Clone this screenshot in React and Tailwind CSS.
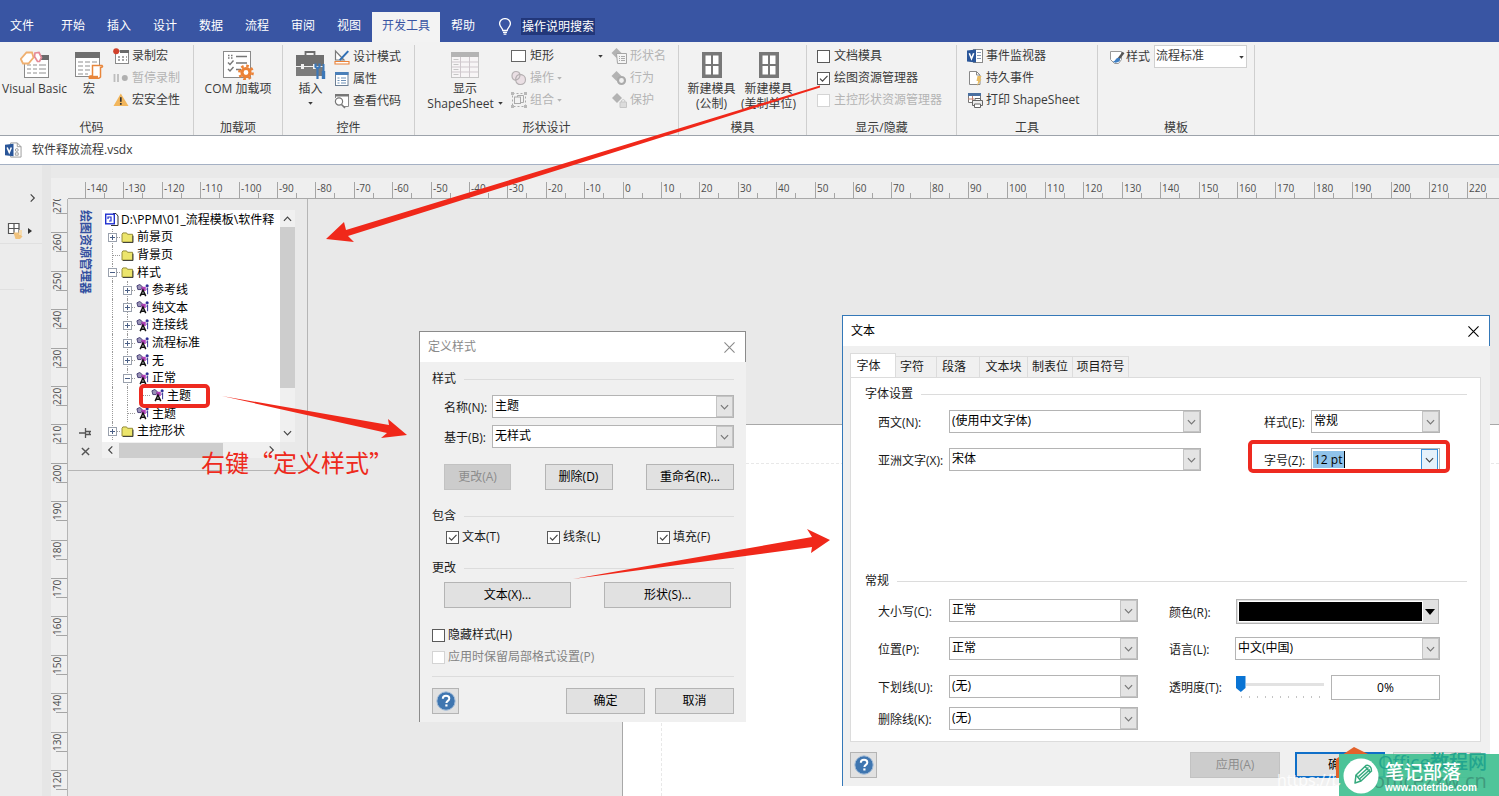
import React from "react";

const RULER_STEP = 38.4;

/* ---------- small shared pieces ---------- */

function Caret({ className = "" }) {
  return (
    <svg viewBox="0 0 6 4" className={"w-[5px] h-[3px] shrink-0 " + className} aria-hidden="true">
      <path d="M0 0h6L3 3.6z" fill="currentColor" />
    </svg>
  );
}

function Chevron({ className = "" }) {
  return (
    <svg viewBox="0 0 10 6" className={"w-[9px] h-[6px] " + className} fill="none" stroke="currentColor" strokeWidth="1.3" aria-hidden="true">
      <path d="M1 1l4 4 4-4" />
    </svg>
  );
}

function HelpIcon() {
  return (
    <svg viewBox="0 0 20 20" className="w-5 h-5" aria-hidden="true">
      <circle cx="10" cy="10" r="9.2" fill="#3f76b0" stroke="#a9c0da" strokeWidth="1" />
      <path d="M6.8 7.8C6.8 5.7 8.2 4.8 10 4.8c2 0 3.3 1 3.3 2.7 0 2.3-2.9 2.4-2.9 4.4" fill="none" stroke="#fff" strokeWidth="2" />
      <rect x="9.3" y="13.4" width="2.2" height="2.1" fill="#fff" />
    </svg>
  );
}

function VisioDoc({ className = "" }) {
  return (
    <svg viewBox="0 0 18 16" className={"w-[17px] h-4 shrink-0 " + className} aria-hidden="true">
      <path d="M6 .5h7l4 4v11H6z" fill="#fff" stroke="#9a9a9a" />
      <path d="M13 .5v4h4" fill="none" stroke="#9a9a9a" />
      <circle cx="12.5" cy="8" r="1.5" fill="none" stroke="#9a9a9a" />
      <path d="M11 11h3v2.5h-3z" fill="none" stroke="#9a9a9a" />
      <path d="M0 2.5l9-1v13l-9-1z" fill="#2a5699" />
      <path d="M2.3 5.3l2.2 5.4 2.2-5.4" fill="none" stroke="#fff" strokeWidth="1.6" />
    </svg>
  );
}

/* ---------- title bar and tabs ---------- */

const TABS = ["开始", "插入", "设计", "数据", "流程", "审阅", "视图"];

function Header() {
  return (
    <header className="h-[42px] bg-[#3955a3] pt-3 flex text-white">
      <nav className="flex h-[30px]">
        <button className="w-[50px] pl-[10px] text-left pb-[2px]">文件</button>
        {TABS.map((t) => (
          <button key={t} className="w-[46px] pb-[2px]">{t}</button>
        ))}
        <button className="w-[68px] bg-[#f3f3f3] text-[#3955a3] pb-[2px]">开发工具</button>
        <button className="w-[46px] pb-[2px]">帮助</button>
      </nav>
      <div className="flex items-center h-[28px] ml-[13px] gap-[10px]">
        <svg viewBox="0 0 12 17" className="w-3 h-[17px]" fill="none" stroke="#fff" strokeWidth="1.3" aria-hidden="true">
          <path d="M3.8 12.5c0-2.6-3.2-3.4-3.2-6.9a5.4 5 0 0 1 10.8 0c0 3.5-3.2 4.3-3.2 6.9zM4 14.4h4M4.6 16.2h2.8" />
        </svg>
        <button className="bg-[#22377a] px-px h-[17px] leading-[17px]">操作说明搜索</button>
      </div>
    </header>
  );
}

/* ---------- ribbon ---------- */

function Group({ title, width, children }) {
  return (
    <section className={"flex flex-col border-r border-[#cfcfcf] shrink-0 " + width}>
      <div className="h-[76px] flex items-start">{children}</div>
      <h2 className="text-center h-[14px] leading-[14px]">{title}</h2>
    </section>
  );
}

function BigButton({ icon, width, disabled, children }) {
  return (
    <button className={"flex flex-col items-center whitespace-nowrap shrink-0 " + width}>
      <span className={"h-[33px] flex items-center justify-center " + (disabled ? "opacity-60" : "")}>{icon}</span>
      <span className="leading-[15px]">{children}</span>
    </button>
  );
}

function SmallButton({ icon, disabled, caret, children }) {
  return (
    <button className={"flex items-center h-[22px] gap-[3px] whitespace-nowrap " + (disabled ? "text-[#b4b4b4]" : "")}>
      <span className="w-4 h-4 flex items-center justify-center shrink-0">{icon}</span>
      <span>{children}</span>
      {caret && <Caret />}
    </button>
  );
}

function RibbonCheck({ id, label, checked, disabled }) {
  return (
    <label htmlFor={id} className={"flex items-center h-[22px] gap-1 whitespace-nowrap " + (disabled ? "text-[#b4b4b4]" : "")}>
      <CheckBox id={id} checked={checked} disabled={disabled} />
      {label}
    </label>
  );
}

function CheckBox({ id, checked, disabled }) {
  return (
    <span className="relative w-[13px] h-[13px] shrink-0">
      <input
        id={id}
        type="checkbox"
        defaultChecked={checked}
        disabled={disabled}
        className={"peer block appearance-none w-[13px] h-[13px] bg-white border " + (disabled ? "border-[#d4d4d4]" : "border-[#5a5a5a]")}
      />
      <svg viewBox="0 0 13 13" className="absolute inset-0 hidden peer-checked:block pointer-events-none" fill="none" stroke="#444" strokeWidth="1.2" aria-hidden="true">
        <path d="M3 6.6l2.5 2.6 5-5.4" />
      </svg>
    </span>
  );
}

const VbIcon = (
  <svg viewBox="0 0 30 28" className="w-[30px] h-7">
    <rect x="4.5" y="6" width="24" height="20.5" fill="#fff" stroke="#8a8a8a" />
    <path d="M20 4h9v5h-9z" fill="#6b6b6b" />
    <path d="M7 14h4m2 0h4m2 0h7M7 18h4m2 0h4m2 0h7M7 22h4m2 0h4m2 0h7" stroke="#b5b5b5" strokeWidth="1.4" />
    <path d="M6.5 1.5h5.5l1.5 5-5 6H3L.8 8z" fill="#fff" stroke="#f0b070" strokeWidth="1.8" />
    <path d="M15 2l4-.5 2.5 5-2 4h-2l-3-5z" fill="#fff" stroke="#e58a98" strokeWidth="1.7" />
  </svg>
);
const MacroIcon = (
  <svg viewBox="0 0 30 28" className="w-[30px] h-7">
    <rect x="1.5" y="1.5" width="24" height="24" fill="#fff" stroke="#8a8a8a" />
    <path d="M1 1h25v6H1z" fill="#6f6f6f" />
    <path d="M4 11h5m2 0h5m2 0h5M4 15h5m2 0h5m2 0h5M4 19h5m2 0h5M4 23h5m2 0h3" stroke="#b5b5b5" strokeWidth="1.5" />
    <path d="M18.5 14.5h9.5q1.5 1.5-1.5 2v9.5q-1.5 1.5-3 1.5h-8q-1-2.5 1.5-2.5h1.5z" fill="#fff" stroke="#e8863c" strokeWidth="1.5" />
    <path d="M15 24.8h9v2.4h-9z" fill="#e8863c" />
  </svg>
);
const RecordIcon = (
  <svg viewBox="0 0 16 16" className="w-4 h-4">
    <rect x="2.5" y="3" width="13" height="12.5" fill="#fff" stroke="#8a8a8a" />
    <path d="M7 2h9v3H7z" fill="#6b6b6b" />
    <path d="M5 9h2m2 0h2m2 0h1M5 12h2m2 0h2m2 0h1" stroke="#8a8a8a" strokeWidth="1.3" />
    <circle cx="3.2" cy="3.2" r="3" fill="#d0402a" />
  </svg>
);
const PauseIcon = (
  <svg viewBox="0 0 16 16" className="w-4 h-4">
    <path d="M1.500 4v8M5 4v8" stroke="#bdbdbd" strokeWidth="1.8" />
    <circle cx="11.8" cy="8" r="3" fill="#b0b0b0" />
  </svg>
);
const WarnIcon = (
  <svg viewBox="0 0 16 16" className="w-4 h-4">
    <path d="M7.8 1.5L15.5 14H.5z" fill="#f2b65c" />
    <path d="M7.8 5.2v4.6" stroke="#333" strokeWidth="1.7" />
    <path d="M7.8 11v1.8" stroke="#333" strokeWidth="1.7" />
  </svg>
);
const ComIcon = (
  <svg viewBox="0 0 32 30" className="w-8 h-[30px]">
    <rect x="1.500" y="1.500" width="27" height="26" fill="#fff" stroke="#8a8a8a" />
    <path d="M6 5.500h1.500m1.500 0h1.500M6 8h1.500m1.500 0h1.500M14 6.500h11M14 13h11M14 19.500h5" stroke="#777" strokeWidth="1.300" />
    <path d="M6 12.500l2 2 3.500-4M6 19l2 2 3.500-4" fill="none" stroke="#777" strokeWidth="1.400" />
    <circle cx="24" cy="22.500" r="4" fill="#fff" stroke="#ec8237" strokeWidth="3.200" />
    <circle cx="24" cy="22.500" r="6.600" fill="none" stroke="#ec8237" strokeWidth="2.600" strokeDasharray="2.600 2.580" />
  </svg>
);
const ToolboxIcon = (
  <svg viewBox="0 0 32 30" className="w-8 h-[30px]">
    <path d="M10.500 5V2h9v3" fill="none" stroke="#6b6b6b" strokeWidth="1.800" />
    <path d="M1 5h28v11H1z" fill="#6f6f6f" />
    <path d="M1 17h28v9H1z" fill="#7c7c7c" />
    <path d="M6 14h3v5H6zM18 14h3v5h-3z" fill="#f1f1f1" />
    <path d="M20.500 13.500v3.500q2 2 4 0v-3.500M22.500 18v11" fill="none" stroke="#3c78b8" strokeWidth="2.200" />
    <path d="M28.500 14v8" stroke="#3c78b8" strokeWidth="2" />
    <path d="M28.500 21v8" stroke="#3c78b8" strokeWidth="3.400" />
  </svg>
);
const DesignIcon = (
  <svg viewBox="0 0 16 16" className="w-4 h-4">
    <path d="M1.500 2v9l8.500 0z" fill="#fff" stroke="#7a7a7a" strokeWidth="1.200" />
    <path d="M5 10.500L13.500 1.500l1.500 1.300-8.500 9z" fill="#2f6fb5" />
    <path d="M1 12.500h14v2.500H1z" fill="#fff" stroke="#ec8237" strokeWidth="1.100" />
  </svg>
);
const PropsIcon = (
  <svg viewBox="0 0 16 16" className="w-4 h-4">
    <rect x="1.500" y="1.500" width="12.500" height="13" fill="#fff" stroke="#6b7f95" />
    <path d="M1 1h13.500v3H1z" fill="#4a7fb8" />
    <path d="M3.500 7h2m1.500 0h5M3.500 9.500h2m1.500 0h5M3.500 12h2m1.500 0h5" stroke="#6d8fb5" strokeWidth="1.200" />
  </svg>
);
const CodeIcon = (
  <svg viewBox="0 0 16 16" className="w-4 h-4">
    <path d="M1.500 5V1.500h13v12H10" fill="#fff" stroke="#8a8a8a" />
    <path d="M1 1h14v2.500H1z" fill="#777" />
    <circle cx="5" cy="8.500" r="3.600" fill="#fff" stroke="#777" strokeWidth="1.200" />
    <path d="M7.500 11.500l3.500 3.500" stroke="#777" strokeWidth="1.600" />
  </svg>
);
const SheetIcon = (
  <svg viewBox="0 0 28 26" className="w-7 h-[26px]">
    <rect x=".5" y=".5" width="27" height="25" fill="#fbf8fa" stroke="#a8a8a8" />
    <path d="M0 0h28v5H0z" fill="#8b8b8b" />
    <path d="M9.500 5v20M18.500 5v20M1 10h26M1 15h26M1 20h26" stroke="#b9adb5" />
    <path d="M2.500 7.500h5M2.500 12.500h5M2.500 17.500h5M2.500 22.500h5" stroke="#aaa" />
  </svg>
);
const RectIcon = (
  <svg viewBox="0 0 16 16" className="w-4 h-4">
    <rect x=".5" y="2.500" width="14" height="11" fill="#fff" stroke="#666" />
  </svg>
);
const OperateIcon = (
  <svg viewBox="0 0 16 16" className="w-4 h-4" fill="#eadfe4" stroke="#b5b0b2" strokeWidth="1.200">
    <path d="M5 1.500c2.200 0 3.500 1.200 4 2.800 3 .2 5.500 2.200 5.500 5.200 0 2.900-2 5-4.800 5-2.700 0-4.500-1.800-5-4.200C2.500 9.800 1 8 1 5.700 1 3.200 2.700 1.500 5 1.500z" />
    <path d="M9 4.300c-2.700.3-4.500 2.700-4.300 6M9 4.300c.3 2.700-1.500 5-4.300 6" fill="none" />
  </svg>
);
const GroupIcon = (
  <svg viewBox="0 0 16 16" className="w-4 h-4" fill="none" stroke="#aaa">
    <rect x="1.500" y="1.500" width="13" height="13" strokeDasharray="2 2" />
    <rect x="3.500" y="5" width="6" height="6.500" />
    <path d="M6.500 5V3.500h6v7H10" />
    <path d="M0 0h3v3H0zM13 0h3v3h-3zM0 13h3v3H0zM13 13h3v3h-3z" fill="#b8b8b8" stroke="none" />
  </svg>
);
const NameIcon = (
  <svg viewBox="0 0 16 16" className="w-4 h-4">
    <path d="M5.500 0l5 5-5 5-5-5z" fill="#b3b3b3" />
    <path d="M5.500 5.500h10v10h-9z" fill="#f5f5f5" stroke="#a5a5a5" />
    <path d="M8 8.500h1m1 0h4M8 10.500h1m1 0h4M8 12.500h1m1 0h4" stroke="#aaa" />
  </svg>
);
const BehaveIcon = (
  <svg viewBox="0 0 16 16" className="w-4 h-4">
    <path d="M5.500 1l5 5-5 5-5-5z" fill="#b3b3b3" />
    <circle cx="10.500" cy="10.500" r="3.500" fill="#f1f1f1" stroke="#aaa" strokeWidth="2.200" />
  </svg>
);
const ProtectIcon = (
  <svg viewBox="0 0 16 16" className="w-4 h-4">
    <path d="M6 1l5 5-5 5-5-5z" fill="#b3b3b3" />
    <path d="M9 10h6.500v5.500H9z" fill="#dcdcdc" stroke="#c6c6c6" />
    <path d="M10.500 10V8.500q1.700-2 3.400 0V10" fill="none" stroke="#c6c6c6" />
  </svg>
);
const StencilIcon = (
  <svg viewBox="0 0 22 28" className="w-[22px] h-7">
    <path d="M1 1h20v26H1z" fill="#787878" />
    <path d="M4.500 4.500h5.500v8.500H4.500zM12 4.500h5.500v8.500H12zM4.500 15h5.500v8.500H4.500zM12 15h5.500v8.500H12z" fill="#fff" />
  </svg>
);
const EventMonitorIcon = (
  <svg viewBox="0 0 16 16" className="w-4 h-4">
    <rect x="6.500" y="1.500" width="9" height="13" fill="#fff" stroke="#8a8a8a" />
    <path d="M10 4.500h4M10 7.500h4M10 10.500h4" stroke="#8a9bb5" />
    <path d="M0 2.500l9-1v13l-9-1z" fill="#2a5699" />
    <path d="M2.300 5.300l2.200 5.400 2.200-5.400" fill="none" stroke="#fff" strokeWidth="1.600" />
  </svg>
);
const PersistIcon = (
  <svg viewBox="0 0 16 16" className="w-4 h-4">
    <path d="M2.500 1.500h7l3.500 3.500v9.500H2.500z" fill="#fff" stroke="#888" />
    <path d="M9.500 1.500v3.500H13" fill="none" stroke="#888" />
    <path d="M10.500 6h4l-1.500 3.500h1.500L10 16l1.200-5H9.500z" fill="#e9bd62" />
  </svg>
);
const PrintIcon = (
  <svg viewBox="0 0 16 16" className="w-4 h-4">
    <path d="M1.500 1.500h12v9h-12z" fill="#fff" stroke="#777" />
    <path d="M1 1h13v3H1z" fill="#4a6f9f" />
    <path d="M5.500 4v8M1 7h6" stroke="#c08070" />
    <path d="M5.500 8.500h10v5h-10z" fill="#ededed" stroke="#666" />
    <path d="M8 6.500h5.500v2H8zM7.500 12h6v3.500h-6z" fill="#fff" stroke="#666" />
  </svg>
);
const StyleIcon = (
  <svg viewBox="0 0 16 16" className="w-4 h-4">
    <path d="M1.500 2.500h11v8l-3 4h-4l-4-4z" fill="#fff" stroke="#999" />
    <path d="M14.500 3.500l-5 6.500" stroke="#555" strokeWidth="2.400" />
    <path d="M4 12.500q1.500 2 5 .5 2.500-1 2-3.500-2-1.500-4 .5-1 2-3 2.500z" fill="#3f7ec2" />
  </svg>
);

function Ribbon() {
  return (
    <div className="h-[94px] bg-[#f2f2f2] border-b border-[#9da3ab] pt-[3px] flex text-[#3a3a3a] overflow-hidden">
      <Group title="代码" width="w-[194px] pr-[10px]">
        <BigButton icon={VbIcon} width="w-[69px] mt-[3px]">Visual Basic</BigButton>
        <BigButton icon={MacroIcon} width="w-[40px] mt-[3px]">宏</BigButton>
        <div className="ml-1">
          <SmallButton icon={RecordIcon}>录制宏</SmallButton>
          <SmallButton icon={PauseIcon} disabled>暂停录制</SmallButton>
          <SmallButton icon={WarnIcon}>宏安全性</SmallButton>
        </div>
      </Group>
      <Group title="加载项" width="w-[89px]">
        <BigButton icon={ComIcon} width="w-full mt-[3px]">COM 加载项</BigButton>
      </Group>
      <Group title="控件" width="w-[132px]">
        <BigButton icon={ToolboxIcon} width="w-[51px] pl-1 mt-[3px]">
          插入<Caret className="mx-auto mt-[6px]" />
        </BigButton>
        <div className="pt-px">
          <SmallButton icon={DesignIcon}>设计模式</SmallButton>
          <SmallButton icon={PropsIcon}>属性</SmallButton>
          <SmallButton icon={CodeIcon}>查看代码</SmallButton>
        </div>
      </Group>
      <Group title="形状设计" width="w-[264px]">
        <BigButton icon={SheetIcon} width="w-[96px] pl-1 mt-[3px]" disabled>
          显示<span className="flex items-center gap-1">ShapeSheet<Caret /></span>
        </BigButton>
        <div>
          <div className="flex items-center w-[92px] justify-between">
            <SmallButton icon={RectIcon}>矩形</SmallButton>
            <Caret />
          </div>
          <SmallButton icon={OperateIcon} disabled caret>操作</SmallButton>
          <SmallButton icon={GroupIcon} disabled caret>组合</SmallButton>
        </div>
        <div className="ml-2">
          <SmallButton icon={NameIcon} disabled>形状名</SmallButton>
          <SmallButton icon={BehaveIcon} disabled>行为</SmallButton>
          <SmallButton icon={ProtectIcon} disabled>保护</SmallButton>
        </div>
      </Group>
      <Group title="模具" width="w-[128px]">
        <BigButton icon={StencilIcon} width="w-[57px] ml-1 mt-[3px]">新建模具<br />(公制)</BigButton>
        <BigButton icon={StencilIcon} width="w-[57px] mt-[3px]">新建模具<br />(美制单位)</BigButton>
      </Group>
      <Group title="显示/隐藏" width="w-[150px]">
        <div className="ml-[10px]">
          <RibbonCheck id="doc-stencil" label="文档模具" />
          <RibbonCheck id="drawing-explorer" label="绘图资源管理器" checked />
          <RibbonCheck id="master-explorer" label="主控形状资源管理器" disabled />
        </div>
      </Group>
      <Group title="工具" width="w-[141px]">
        <div className="ml-[10px]">
          <SmallButton icon={EventMonitorIcon}>事件监视器</SmallButton>
          <SmallButton icon={PersistIcon}>持久事件</SmallButton>
          <SmallButton icon={PrintIcon}>打印 ShapeSheet</SmallButton>
        </div>
      </Group>
      <Group title="模板" width="w-[157px]">
        <div className="ml-[11px] flex items-center">
          {StyleIcon}
          <label htmlFor="ribbon-style" className="ml-px">样式</label>
          <span className="relative ml-1">
            <select id="ribbon-style" className="block appearance-none w-[93px] h-[23px] bg-white border border-[#d0d0d0] pl-px pb-[2px]">
              <option>流程标准</option>
            </select>
            <Caret className="absolute right-[3px] top-[11px] pointer-events-none" />
          </span>
        </div>
      </Group>
    </div>
  );
}

/* ---------- rulers ---------- */

function HorizontalRuler() {
  const marks = Array.from({ length: 37 }, (_, i) => ({ value: -140 + i * 10, x: 17 + Math.round(i * RULER_STEP) }));
  return (
    <svg className="block w-full h-[21px] bg-[#efefef] border-b border-[#a9a9a9]" aria-label="水平标尺">
      <g stroke="#a5a5a5" shapeRendering="crispEdges">
        {marks.map((m) => (
          <path key={m.value} d={`M${m.x}.5 4v16M${m.x + 19}.5 15v5`} />
        ))}
      </g>
      <g fill="#4d4d4d" fontSize="10">
        {marks.map((m) => (
          <text key={m.value} x={m.x + 2} y="14">{m.value}</text>
        ))}
      </g>
    </svg>
  );
}

function VerticalRuler() {
  const marks = Array.from({ length: 16 }, (_, i) => ({ value: 270 - i * 10, y: -5 + Math.round(i * RULER_STEP) }));
  return (
    <svg className="block w-[17px] h-full bg-[#efefef] border-r border-[#b5b5b5]" aria-label="垂直标尺">
      <g stroke="#a5a5a5" shapeRendering="crispEdges">
        {marks.map((m) => (
          <path key={m.value} d={`M0 ${m.y}.5h16M5 ${m.y + 19}.5h11`} />
        ))}
      </g>
      <g fill="#4d4d4d" fontSize="10">
        {marks.map((m) => (
          <text key={m.value} transform={`translate(10 ${m.y + 19}) rotate(-90)`}>{m.value}</text>
        ))}
      </g>
    </svg>
  );
}

/* ---------- drawing explorer ---------- */

function Folder() {
  return (
    <svg viewBox="0 0 14 12" className="w-[13px] h-[11px]" aria-hidden="true">
      <path d="M1 2.500L2 1h4l1 1.500h5.500v8.500H1z" fill="#ece56c" stroke="#8c8430" />
      <path d="M2 11.500h11V4" fill="none" stroke="#333" />
    </svg>
  );
}

function StyleGlyph() {
  return (
    <svg viewBox="0 0 14 14" className="w-[13px] h-[13px]" aria-hidden="true">
      <path d="M1 2l3-1.500 3 2.500-1.500 3L2 6z" fill="#9a93b8" stroke="#403870" />
      <path d="M6 3h4.500v4.500H6z" fill="#b040b8" />
      <path d="M11 1h2v2h-2zM11 5.500h1.500M12.500 4v7" fill="#2020a0" stroke="#2a2a90" />
      <path d="M4.500 13L7.500 6.500 10.500 13M5.500 11h4" fill="none" stroke="#111" strokeWidth="1.600" />
    </svg>
  );
}

function RootGlyph() {
  return (
    <svg viewBox="0 0 14 13" className="w-[14px] h-[13px]" aria-hidden="true">
      <path d="M8 .5h3l2 2.500v9.500H6" fill="#fff" stroke="#333" />
      <rect x=".7" y="1.200" width="8.600" height="9.600" fill="#fff" stroke="#2030d0" strokeWidth="1.400" />
      <path d="M3 6V4h3v4H4" fill="none" stroke="#2030d0" strokeWidth="1.200" />
    </svg>
  );
}

function Guide({ line, branch, expander }) {
  return (
    <span className="relative w-[15px] self-stretch flex items-center justify-center shrink-0">
      {line && <span className="absolute left-[7px] inset-y-0 border-l border-dotted border-[#9a9a9a]" />}
      {branch && <span className="absolute left-[7px] right-0 border-t border-dotted border-[#9a9a9a]" />}
      {expander && (
        <svg viewBox="0 0 9 9" className="relative w-[9px] h-[9px]" aria-hidden="true">
          <rect x=".5" y=".5" width="8" height="8" fill="#fff" stroke="#9aa1ad" />
          <path d={expander === "+" ? "M2 4.500h5M4.500 2v5" : "M2 4.500h5"} stroke="#4a5f86" />
        </svg>
      )}
    </span>
  );
}

const TREE = [
  { label: "前景页", level: 1, expander: "+" },
  { label: "背景页", level: 1 },
  { label: "样式", level: 1, expander: "-" },
  { label: "参考线", level: 2, expander: "+" },
  { label: "纯文本", level: 2, expander: "+" },
  { label: "连接线", level: 2, expander: "+" },
  { label: "流程标准", level: 2, expander: "+" },
  { label: "无", level: 2, expander: "+" },
  { label: "正常", level: 2, expander: "-" },
  { label: "主题", level: 3 },
  { label: "主题", level: 2 },
  { label: "主控形状", level: 1, expander: "+" },
];

function Explorer() {
  return (
    <aside className="w-[240px] h-[272px] bg-[#e9e9e9] border-r border-b border-[#b5b5b5] flex shrink-0 pt-[11px] pb-[10px]">
      <div className="w-[34px] flex flex-col items-center justify-between">
        <h2 className="text-[#3350a0] font-bold leading-[14px] [writing-mode:vertical-rl] [text-orientation:sideways]">绘图资源管理器</h2>
        <div className="flex flex-col items-center gap-[9px] text-[#555]">
          <button aria-label="固定">
            <svg viewBox="0 0 12 10" className="w-3 h-[10px]" fill="none" stroke="currentColor" strokeWidth="1.300">
              <path d="M0 5h6M6.500 0v10M6 3.500h6M6 6.500h6M10.500 3v4" />
            </svg>
          </button>
          <button aria-label="关闭">
            <svg viewBox="0 0 10 10" className="w-[9px] h-[9px] mb-1" fill="none" stroke="currentColor" strokeWidth="1.600">
              <path d="M1 1l8 8M9 1l-8 8" />
            </svg>
          </button>
        </div>
      </div>
      <div className="flex flex-col w-[193px]">
        <div className="flex">
          <ul className="w-[178px] h-[232px] bg-white pl-[3px] pt-px pb-[2px] flex flex-col overflow-hidden text-black">
            <li className="flex-1 flex items-center gap-[2px] whitespace-nowrap">
              <RootGlyph />
              <span className="leading-4">D:\PPM\01_流程模板\软件释</span>
            </li>
            {TREE.map((n, i) => (
              <li key={i} className="flex-1 flex items-center whitespace-nowrap">
                <Guide line branch={n.level === 1} expander={n.level === 1 && n.expander} />
                {n.level > 1 && <Guide line branch={n.level === 2} expander={n.level === 2 && n.expander} />}
                {n.level > 2 && <Guide branch />}
                <span className="w-[17px] flex items-center pl-px shrink-0">{n.level === 1 ? <Folder /> : <StyleGlyph />}</span>
                <span className="leading-4">{n.label}</span>
              </li>
            ))}
          </ul>
          <div className="w-[15px] bg-[#f0f0f0] flex flex-col items-center text-[#444]">
            <span className="h-[17px] flex items-center"><Chevron className="rotate-180" /></span>
            <span className="w-full h-[161px] bg-[#cdcdcd]" />
            <span className="flex-1" />
            <span className="h-[18px] flex items-center"><Chevron /></span>
          </div>
        </div>
        <div className="w-[178px] h-4 bg-[#f0f0f0] flex items-center text-[#444]">
          <span className="w-[17px] flex justify-center"><Chevron className="rotate-90" /></span>
          <span className="w-[104px] h-[15px] bg-[#cdcdcd]" />
          <span className="flex-1" />
          <span className="w-[17px] flex justify-center"><Chevron className="-rotate-90" /></span>
        </div>
      </div>
    </aside>
  );
}

/* ---------- dialog controls ---------- */

function Combo({ id, value, width }) {
  return (
    <span className={"relative block shrink-0 " + width}>
      <select id={id} className="block appearance-none w-full h-[23px] bg-white border border-[#b4b4b4] pl-[2px] pb-px text-black">
        <option>{value}</option>
      </select>
      <span className="absolute right-px top-px bottom-px w-[17px] border flex items-center justify-center pointer-events-none bg-[#e4e4e4] border-[#c4c4c4] text-[#777]">
        <Chevron />
      </span>
    </span>
  );
}

function PushButton({ width, disabled, focused, children }) {
  return (
    <button
      disabled={disabled}
      className={
        "h-[26px] leading-[22px] shrink-0 " + width + " " +
        (disabled ? "bg-[#cccccc] border border-[#c2c2c2] text-[#8c8c8c]" : focused ? "bg-[#e1e1e1] border-2 border-[#0f6fc8] text-black" : "bg-[#e1e1e1] border border-[#b4b4b4] text-black")
      }
    >
      {children}
    </button>
  );
}

function Section({ children }) {
  return (
    <div className="flex items-center gap-2 h-4">
      <h3 className="leading-4">{children}</h3>
      <span className="flex-1 border-t border-[#dcdcdc]" />
    </div>
  );
}

function Check({ id, label, checked, disabled }) {
  return (
    <label htmlFor={id} className={"flex items-center gap-[3px] h-[22px] whitespace-nowrap " + (disabled ? "text-[#838383]" : "")}>
      <CheckBox id={id} checked={checked} disabled={disabled} />
      {label}
    </label>
  );
}

function CloseX({ className }) {
  return (
    <button aria-label="关闭" className={className}>
      <svg viewBox="0 0 12 12" className="w-[11px] h-[11px]" fill="none" stroke="currentColor" strokeWidth="1.200">
        <path d="M.5.5l11 11M11.500.5l-11 11" />
      </svg>
    </button>
  );
}

function HelpButton() {
  return (
    <button aria-label="帮助" className="w-[27px] h-[26px] bg-[#e1e1e1] border border-[#b4b4b4] flex items-center justify-center">
      <HelpIcon />
    </button>
  );
}

function DefineStyleDialog() {
  return (
    <section role="dialog" aria-label="定义样式" className="absolute left-[419px] top-[331px] w-[327px] bg-[#f0f0f0] border-l border-t border-[#8b8b8b] text-[#1a1a1a] pb-[8px]">
      <div className="h-[30px] bg-white border-r border-[#8b8b8b] flex items-center justify-between pl-2 pr-[10px] text-[#8a8a8a]">
        <h2>定义样式</h2>
        <CloseX />
      </div>
      <div className="px-[12px] pt-[9px]">
        <Section>样式</Section>
        <div className="pl-[12px] pt-2 flex flex-col gap-[7px]">
          <div className="flex items-end">
            <label htmlFor="style-name" className="w-12 leading-5 whitespace-nowrap">名称(N):</label>
            <Combo id="style-name" value="主题" width="w-[242px]" />
          </div>
          <div className="flex items-end">
            <label htmlFor="style-base" className="w-12 leading-5 whitespace-nowrap">基于(B):</label>
            <Combo id="style-base" value="无样式" width="w-[242px]" />
          </div>
        </div>
        <div className="pl-[12px] pt-4 flex justify-between">
          <PushButton width="w-[67px]" disabled>更改(A)</PushButton>
          <PushButton width="w-[68px]">删除(D)</PushButton>
          <PushButton width="w-[88px]">重命名(R)...</PushButton>
        </div>
        <div className="pt-[18px]"><Section>包含</Section></div>
        <div className="pt-[2px] pl-[14px] grid grid-cols-[101px_110px_auto]">
          <Check id="inc-text" label="文本(T)" checked />
          <Check id="inc-line" label="线条(L)" checked />
          <Check id="inc-fill" label="填充(F)" checked />
        </div>
        <div className="pt-3"><Section>更改</Section></div>
        <div className="pt-[6px] pl-[12px] pr-[3px] flex justify-between">
          <PushButton width="w-[127px]">文本(X)...</PushButton>
          <PushButton width="w-[127px]">形状(S)...</PushButton>
        </div>
        <div className="pt-4 pb-[8px] border-b border-[#dcdcdc]">
          <Check id="hide-style" label="隐藏样式(H)" />
          <Check id="keep-format" label="应用时保留局部格式设置(P)" disabled />
        </div>
        <div className="pt-[11px] flex gap-[10px]">
          <HelpButton />
          <span className="flex-1" />
          <PushButton width="w-[79px]">确定</PushButton>
          <PushButton width="w-[79px]">取消</PushButton>
        </div>
      </div>
    </section>
  );
}

function Field({ id, label, value }) {
  return (
    <div className="flex items-end">
      <label htmlFor={id} className="w-[71px] leading-5 whitespace-nowrap">{label}</label>
      <Combo id={id} value={value} width="w-[189px]" />
    </div>
  );
}

function TextDialog() {
  return (
    <section role="dialog" aria-label="文本" className="absolute left-[842px] top-[315px] w-[648px] bg-[#f0f0f0] border-l border-t border-[#3478b8] text-[#1a1a1a] pb-[8px]">
      <div className="h-[30px] bg-white border-r border-[#3478b8] flex items-center justify-between pl-2 pr-[10px] text-black">
        <h2>文本</h2>
        <CloseX />
      </div>
      <div className="pl-[7px] pr-[9px] pt-[7px]">
        <div role="tablist" className="flex items-end h-6">
          <button role="tab" className="h-6 w-[46px] bg-white border border-b-0 border-[#dcdcdc] pr-[9px]">字体</button>
          <button role="tab" className="h-[21px] w-[41px] border-t border-r border-[#dcdcdc] pr-2">字符</button>
          <button role="tab" className="h-[21px] w-[43px] border-t border-r border-[#dcdcdc] pr-2">段落</button>
          <button role="tab" className="h-[21px] w-[48px] border-t border-r border-[#dcdcdc]">文本块</button>
          <button role="tab" className="h-[21px] w-[45px] border-t border-r border-[#dcdcdc]">制表位</button>
          <button role="tab" className="h-[21px] w-[56px] border-t border-r border-[#dcdcdc]">项目符号</button>
        </div>
        <div className="bg-white border border-[#dcdcdc] h-[365px] pl-[14px] pr-[13px] pt-2 flex flex-col">
          <Section>字体设置</Section>
          <div className="pl-[13px] pr-[27px] pt-2 flex justify-between">
            <div className="flex flex-col gap-[15px]">
              <div className="flex items-end">
                <label htmlFor="font-latin" className="w-[71px] leading-5 whitespace-nowrap">西文(N):</label>
                <Combo id="font-latin" value="(使用中文字体)" width="w-[252px]" />
              </div>
              <div className="flex items-end">
                <label htmlFor="font-asian" className="w-[71px] leading-5 whitespace-nowrap">亚洲文字(X):</label>
                <Combo id="font-asian" value="宋体" width="w-[252px]" />
              </div>
            </div>
            <div className="flex flex-col gap-[15px]">
              <div className="flex items-end">
                <label htmlFor="font-style" className="w-[47px] leading-5 whitespace-nowrap">样式(E):</label>
                <Combo id="font-style" value="常规" width="w-[129px]" />
              </div>
              <div className="flex items-end">
                <label htmlFor="font-size" className="w-[47px] leading-5 whitespace-nowrap">字号(Z):</label>
                <span className="relative flex items-center w-[129px] h-[23px] bg-white border border-[#b4b4b4] pl-px">
                  <span className="relative border-r border-black">
                    <input id="font-size" defaultValue="12 pt" className="block w-[31px] h-[17px] px-px bg-[#90c3ea] text-black outline-none" />
                  </span>
                  <button aria-label="字号列表" className="absolute right-px inset-y-0 w-[17px] bg-[#e5f1fb] border border-[#3a8fd8] flex items-center justify-center text-[#444]">
                    <Chevron />
                  </button>
                </span>
              </div>
            </div>
          </div>
          <div className="pt-[102px]"><Section>常规</Section></div>
          <div className="pl-[13px] pr-[27px] pt-[10px] flex justify-between">
            <div>
              <div className="flex flex-col gap-[15px]">
                <Field id="case" label="大小写(C):" value="正常" />
                <Field id="position" label="位置(P):" value="正常" />
                <Field id="underline" label="下划线(U):" value="(无)" />
              </div>
              <div className="pt-[9px]">
                <Field id="strike" label="删除线(K):" value="(无)" />
              </div>
            </div>
            <div className="flex flex-col gap-[13px]">
              <div className="flex items-center">
                <label htmlFor="color" className="w-[67px] pt-[2px]">颜色(R):</label>
                <button id="color" aria-label="黑色" className="flex w-[203px] h-[25px] bg-[#e1e1e1] border border-[#b4b4b4] p-px">
                  <span className="flex-1 h-[21px] bg-black border border-white" />
                  <span className="w-[14px] h-[21px] flex items-center justify-center">
                    <svg viewBox="0 0 10 6" className="w-[10px] h-[6px]"><path d="M0 0h10L5 6z" /></svg>
                  </span>
                </button>
              </div>
              <div className="flex items-end">
                <label htmlFor="language" className="w-[66px] leading-5">语言(L):</label>
                <Combo id="language" value="中文(中国)" width="w-[205px]" />
              </div>
              <div className="flex items-center pt-[2px]">
                <label htmlFor="opacity" className="w-[67px] whitespace-nowrap">透明度(T):</label>
                <span className="relative w-[88px] h-[25px]">
                  <input id="opacity" type="range" defaultValue="0" className="absolute inset-0 w-full h-full opacity-0" />
                  <svg viewBox="0 0 88 25" className="absolute inset-0 pointer-events-none" aria-hidden="true">
                    <rect x="10" y="8" width="78" height="3" fill="#e2e2e2" />
                    <path d="M0 1h9.500v12l-4.700 4-4.800-4z" fill="#0a74d4" />
                    <path d="M5.500 21v2M13.500 21v2M21.500 21v2M29.500 21v2M36.500 21v2M44.500 21v2M52.500 21v2M60.500 21v2M67.500 21v2M75.500 21v2M83.500 21v2" stroke="#c4c4c4" />
                  </svg>
                </span>
                <input aria-label="透明度值" defaultValue="0%" className="ml-[7px] w-[109px] h-[25px] border border-[#b4b4b4] bg-white text-center text-black" />
              </div>
            </div>
          </div>
        </div>
        <div className="pt-[10px] flex">
          <HelpButton />
          <span className="flex-1" />
          <PushButton width="w-[90px]" disabled>应用(A)</PushButton>
          <PushButton width="w-[90px] ml-[15px]" focused>确定</PushButton>
          <PushButton width="w-[88px] ml-2 opacity-60">取消</PushButton>
        </div>
      </div>
    </section>
  );
}

/* ---------- annotations and watermark ---------- */

function Annotations() {
  return (
    <>
      <svg className="absolute left-0 top-0 w-full h-full pointer-events-none" aria-hidden="true">
        <g fill="#f0281a">
          <path d="M820 85.500L346 230l-2-8-18 17 28 3-6-6L820 87.500z" />
          <path d="M222 396l167 29-1-6 19 16-26 3 6-5z" />
          <path d="M573 579l239-42-5-8 23 11-19 13 1-6z" />
        </g>
        <g fill="none" stroke="#ee2a20" strokeWidth="4">
          <rect x="141" y="386" width="67" height="20" rx="3" />
          <rect x="1250" y="442" width="198" height="29" rx="3" />
        </g>
      </svg>
      <p className="absolute left-[201px] top-[446px] text-2xl leading-8 text-[#ee2a1c] font-['Noto_Sans_CJK_SC',sans-serif] whitespace-nowrap">右键“定义样式”</p>
    </>
  );
}

function Watermark() {
  return (
    <div className="absolute right-0 bottom-0 w-[160px] h-[42px] bg-[#3dbf8f]/90">
      <span className="absolute -left-[62px] top-[16px] text-base leading-5 text-white/80 whitespace-nowrap">https://b</span>
      <svg viewBox="0 0 34 36" className="absolute -left-[3px] -top-[7px] w-[34px] h-9" aria-hidden="true">
        <path d="M18 0l14 7v24H0V12z" fill="#e2622c" />
        <path d="M3 7h31v29H3z" fill="#4cc398" />
      </svg>
      <span className="absolute left-[39px] -top-[4px] text-[19px] leading-6 font-medium text-[#22a58e] whitespace-nowrap">Office教程网</span>
      <span className="absolute left-[34px] top-[15px] text-xl leading-6 text-[#3f9a7d] whitespace-nowrap">officezxw.cn</span>
      <svg viewBox="0 0 36 36" className="absolute left-1 top-1 w-9 h-9" aria-hidden="true">
        <circle cx="18" cy="18" r="17.500" fill="#fff" />
        <g fill="none" stroke="#35a97d" strokeWidth="1.500" strokeLinejoin="round">
          <path d="M13 17L23 7.500q2-1 4 1t1.500 4.500L18 23l-6 2z" />
          <path d="M13 17l5 6M15.500 18.500l10-9M17 20.500l10-9M22 8.500l5 5.500" />
        </g>
      </svg>
      <div className="absolute left-[46px] top-[7px] text-white">
        <p className="text-[19px] leading-[22px] font-medium whitespace-nowrap">笔记部落</p>
        <p className="font-['Liberation_Sans',sans-serif] text-[10px] leading-[10px] font-bold whitespace-nowrap">www.notetribe.com</p>
      </div>
    </div>
  );
}

/* ---------- page ---------- */

export default function App() {
  return (
    <div className="relative h-screen overflow-hidden flex flex-col bg-[#e9e9e9] text-xs font-['Open_Sans','Noto_Sans_CJK_SC',sans-serif]">
      <Header />
      <Ribbon />
      <div className="h-[29px] bg-white border-b border-[#a5b1c4] flex items-center gap-[10px] pl-[5px] text-[#3a3a3a]">
        <VisioDoc />
        <span>软件释放流程.vsdx</span>
      </div>
      <main className="flex-1 flex min-h-0">
        <aside className="w-[42px] bg-[#ececec] shrink-0 pt-[30px] text-[#444]">
          <button aria-label="展开" className="block ml-[28px]"><Chevron className="-rotate-90" /></button>
          <button aria-label="形状" className="mt-[21px] ml-[7px] flex items-center gap-1">
            <svg viewBox="0 0 16 17" className="w-[17px] h-[17px]" aria-hidden="true">
              <path d="M1 1.500h10.500v10H1zM6.500 1.500v10M1 6.500h10.500" fill="#fff" stroke="#555" strokeWidth="1.200" />
              <path d="M6 10.500h5l4 4-2.500 2.500H8z" fill="#f0c27c" />
              <path d="M11.500 8h3v5h-3z" fill="#f6dcb0" />
            </svg>
            <svg viewBox="0 0 4 6" className="w-1 h-[6px]" aria-hidden="true"><path d="M0 0l4 3-4 3z" fill="#333" /></svg>
          </button>
          <div className="mt-1 border-t border-[#e0e0e0]" />
          <div className="mt-[45px] w-6 border-t border-[#e0e0e0]" />
        </aside>
        <div className="w-[9px] bg-[#e6e6e6] shrink-0" />
        <div className="flex-1 flex flex-col min-w-0 pt-[13px]">
          <div className="bg-[#efefef] pl-[17px]"><HorizontalRuler /></div>
          <div className="flex-1 flex min-h-0">
            <VerticalRuler />
            <div className="relative flex-1 min-w-0">
              <div className="absolute left-[554px] right-0 top-[225px] bottom-0 bg-white border-l border-t border-[#a8a8a8]">
                <div className="absolute left-[38px] right-0 top-[38px] bottom-0 border-l border-t border-dashed border-[#e8e8e8]" />
              </div>
              <div className="relative w-fit"><Explorer /></div>
            </div>
          </div>
        </div>
      </main>
      <DefineStyleDialog />
      <TextDialog />
      <Watermark />
      <Annotations />
    </div>
  );
}
